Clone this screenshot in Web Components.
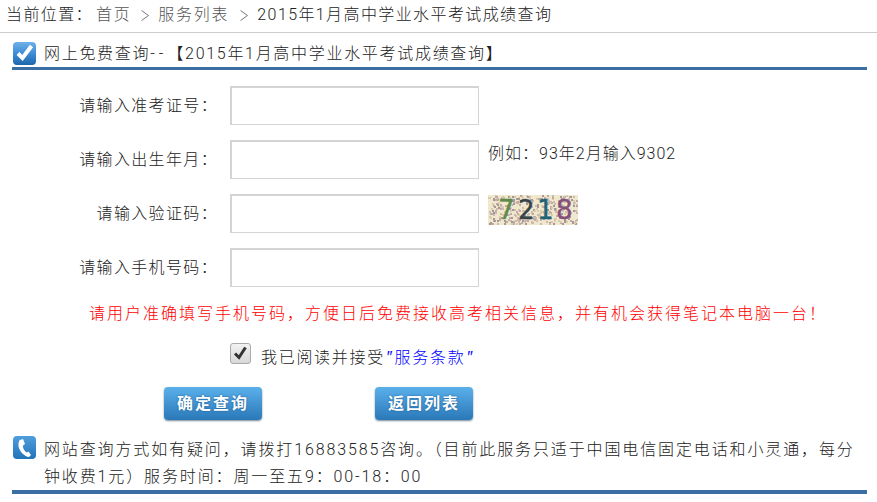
<!DOCTYPE html>
<html lang="zh">
<head>
<meta charset="utf-8">
<title>成绩查询</title>
<style>
html, body { margin: 0; background: #fff; }
body {
    font: 300 16px/24px Roboto, "Noto Sans CJK SC", sans-serif;
    color: #222;
    overflow: hidden;
}
.hint { display: block; margin-top: -12px; letter-spacing: 1px; color: #222; }
.dashes { letter-spacing: 4px; }
</style>
</head>
<body>
<query-crumbs></query-crumbs>
<query-head>网上免费查询<span class="dashes">--</span>【2015年1月高中学业水平考试成绩查询】</query-head>
<query-row label="请输入准考证号："></query-row>
<query-row label="请输入出生年月：" style="--gap:15px"><span class="hint">例如：93年2月输入9302</span></query-row>
<query-row label="请输入验证码：" style="--gap:15px"><query-captcha></query-captcha></query-row>
<query-row label="请输入手机号码：" style="--gap:15px"></query-row>
<query-notice>请用户准确填写手机号码，方便日后免费接收高考相关信息，并有机会获得笔记本电脑一台！</query-notice>
<query-agree></query-agree>
<query-actions></query-actions>
<query-help>网站查询方式如有疑问，请拨打16883585咨询。（目前此服务只适于中国电信固定电话和小灵通，每分钟收费1元）服务时间：周一至五9：00-18：00</query-help>

<script>
// breadcrumb bar
class QueryCrumbs extends HTMLElement {
    constructor() {
        super();
        this.attachShadow({ mode: 'open' });
        this.shadowRoot.innerHTML = `
            <style>
                :host { display: flex; align-items: center; height: 30px; padding: 0 0 2px 6px; border-bottom: 1px solid #ccc; letter-spacing: 1.4px; color: #222; }
                .sep { width: 8px; height: 11px; flex: none; }
                .a { margin: 0 9px 0 9.500px; }
                .b { margin: 0 9px 0 11px; }
                .dim { color: #555; letter-spacing: 1.8px; }
                .home { margin-left: 3px; }
            </style>
            <span>当前位置：</span><span class="dim home">首页</span>
            <svg class="sep a" viewBox="0 0 8 11"><path d="M.5 .5l7 5-7 5" fill="none" stroke="#777"/></svg>
            <span class="dim">服务列表</span>
            <svg class="sep b" viewBox="0 0 8 11"><path d="M.5 .5l7 5-7 5" fill="none" stroke="#777"/></svg>
            <span>2015年1月高中学业水平考试成绩查询</span>
        `;
    }
}

// section title with tick icon and blue rule
class QueryHead extends HTMLElement {
    constructor() {
        super();
        this.attachShadow({ mode: 'open' });
        this.shadowRoot.innerHTML = `
            <style>
                :host { display: flex; gap: 8px; height: 25px; margin: 0 10px 0 12px; padding: 9px 0 0 1px; border-bottom: 3px solid #3a6ea5; letter-spacing: 1.7px; color: #222; white-space: nowrap; }
                svg { width: 23px; height: 23px; flex: none; }
            </style>
            <svg viewBox="0 0 23 23">
                <defs><linearGradient id="g" x2="0" y2="1"><stop offset="0" stop-color="#6fb0e8"/><stop offset=".5" stop-color="#3d8ed6"/><stop offset="1" stop-color="#1f66aa"/></linearGradient></defs>
                <rect width="23" height="23" rx="4" fill="url(#g)"/>
                <path d="M5 11.500l4.500 4.500 9-12" fill="none" stroke="#fff" stroke-width="4"/>
            </svg>
            <span><slot></slot></span>
        `;
    }
}

// label + text input + optional side content
class QueryRow extends HTMLElement {
    constructor() {
        super();
        this.attachShadow({ mode: 'open' });
        this.shadowRoot.innerHTML = `
            <style>
                :host { display: grid; grid-template-columns: 230px 249px 1fr; align-items: center; height: 39px; margin-top: var(--gap, 16px); letter-spacing: 1.35px; color: #222; }
                label { text-align: right; padding-right: 12px; }
                input { box-sizing: border-box; width: 249px; height: 39px; margin: 0; border: 2px solid #d4d4d4; border-width: 2px 1px 1px 2px; background: #fff; }
                .side { padding-left: 9px; }
            </style>
            <label></label>
            <input type="text">
            <div class="side"><slot></slot></div>
        `;
    }

    connectedCallback() {
        this.shadowRoot.querySelector('label').textContent = this.getAttribute('label');
    }
}

// verification picture
class QueryCaptcha extends HTMLElement {
    constructor() {
        super();
        this.attachShadow({ mode: 'open' });
        // fixed noise so every run draws the same picture
        let seed = 7218;
        const next = (n) => {
            seed = (seed * 16807) % 2147483647;
            return seed % n;
        };
        let specks = '';
        for (let i = 0; i < 340; i++) {
            const fill = ['#bfaaa6', '#cdb9b2', '#a8979a', '#d8ccb0'][next(4)];
            specks += `<rect x="${next(89)}" y="${next(29)}" width="2" height="2" fill="${fill}"/>`;
        }
        this.shadowRoot.innerHTML = `
            <style>
                :host { display: block; width: 90px; height: 30px; margin-top: -8px; }
                svg { display: block; overflow: visible; }
                text { font: 26px "DejaVu Sans", sans-serif; stroke-width: .4; }
            </style>
            <svg width="90" height="30" viewBox="0 0 90 30">
                <rect width="90" height="30" fill="#efe8cc"/>
                ${specks}
                <text x="10" y="24" fill="#5f8a4c" stroke="#5f8a4c">7</text>
                <text x="30" y="24" fill="#34444a" stroke="#34444a">2</text>
                <text x="49" y="24" fill="#1f6478" stroke="#1f6478">1</text>
                <text x="68" y="24" fill="#84507a" stroke="#84507a">8</text>
            </svg>
        `;
    }
}

// red notice line
class QueryNotice extends HTMLElement {
    constructor() {
        super();
        this.attachShadow({ mode: 'open' });
        this.shadowRoot.innerHTML = `
            <style>
                :host { display: block; margin-top: 15px; padding-left: 89px; letter-spacing: 2px; color: #f00; white-space: nowrap; }
            </style>
            <slot></slot>
        `;
    }
}

// terms checkbox
class QueryAgree extends HTMLElement {
    constructor() {
        super();
        this.attachShadow({ mode: 'open' });
        this.shadowRoot.innerHTML = `
            <style>
                :host { display: flex; align-items: flex-start; gap: 10px; margin-top: 17px; padding-left: 230px; letter-spacing: 1.7px; color: #222; }
                .box { width: 21px; height: 21px; flex: none; box-sizing: border-box; border: 1px solid #aaa; border-radius: 3px; background: linear-gradient(#f2f2f2, #d8d8d8); }
                svg { display: block; }
                .txt { margin: 3px 0 -1px; }
                a { color: #00f; text-decoration: none; }
                i { font-family: "Liberation Sans", sans-serif; letter-spacing: 2px; padding: 0 1px; }
            </style>
            <span class="box"><svg width="19" height="19" viewBox="0 0 19 19"><path d="M4 9.500l4 4 6.500-10" fill="none" stroke="#333" stroke-width="3"/></svg></span>
            <span class="txt">我已阅读并接受<a href="#"><i>″</i>服务条款<i>″</i></a></span>
        `;
    }
}

// one raised blue button
class QueryButton extends HTMLElement {
    constructor() {
        super();
        this.attachShadow({ mode: 'open' });
        this.shadowRoot.innerHTML = `
            <style>
                :host { display: flex; align-items: center; justify-content: center; width: 98px; height: 33px; border-radius: 4px; background: linear-gradient(#5bb0ea, #2a78b8); box-shadow: 0 1px 2px #789; color: #fff; font-weight: bold; letter-spacing: 2px; text-shadow: 0 0 2px #1c5a90; }
            </style>
            <slot></slot>
        `;
    }
}

class QueryActions extends HTMLElement {
    constructor() {
        super();
        this.attachShadow({ mode: 'open' });
        this.shadowRoot.innerHTML = `
            <style>
                :host { display: flex; gap: 113px; margin-top: 18px; padding-left: 164px; }
            </style>
            <query-button>确定查询</query-button>
            <query-button>返回列表</query-button>
        `;
    }
}

// help note with phone icon
class QueryHelp extends HTMLElement {
    constructor() {
        super();
        this.attachShadow({ mode: 'open' });
        this.shadowRoot.innerHTML = `
            <style>
                :host { display: flex; gap: 8px; height: 54px; margin: 16px 10px 0 12px; padding-left: 1px; border-bottom: 4px solid #3a6ea5; line-height: 27px; letter-spacing: 1.87px; color: #222; }
                svg { width: 23px; height: 23px; flex: none; }
                span { width: 815px; }
            </style>
            <svg viewBox="0 0 23 23">
                <defs><linearGradient id="p" x2="0" y2="1"><stop offset="0" stop-color="#4f9fde"/><stop offset="1" stop-color="#2273b8"/></linearGradient></defs>
                <rect width="23" height="23" rx="4" fill="url(#p)"/>
                <path d="M7 4l3-1 2 5-2 1.500c-.5 2 1.500 5.500 3.500 7l2-1 2.500 3.500-2 2c-4 0-10-6-10.500-11-.3-3 .5-5 1.500-6.500z" fill="#fff"/>
            </svg>
            <span><slot></slot></span>
        `;
    }
}

customElements.define('query-crumbs', QueryCrumbs);
customElements.define('query-head', QueryHead);
customElements.define('query-row', QueryRow);
customElements.define('query-captcha', QueryCaptcha);
customElements.define('query-notice', QueryNotice);
customElements.define('query-agree', QueryAgree);
customElements.define('query-button', QueryButton);
customElements.define('query-actions', QueryActions);
customElements.define('query-help', QueryHelp);
</script>
</body>
</html>
